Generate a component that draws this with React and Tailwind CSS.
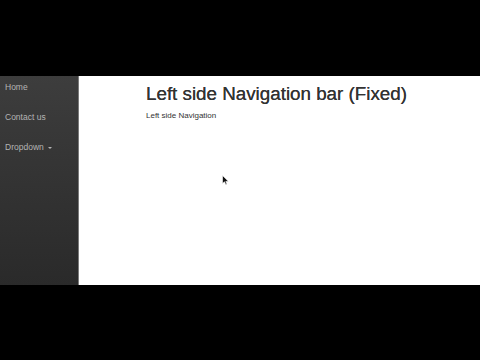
import React from 'react';

const navItems = [
  { label: 'Home' },
  { label: 'Contact us' },
  { label: 'Dropdown', caret: true },
];

const Sidebar = () => (
  <nav className="w-[79px] shrink-0 border-r border-[#7a7a7a] bg-gradient-to-b from-[#3d3d3d] to-[#2a2a2a]">
    <ul className="flex flex-col">
      {navItems.map((item) => (
        <li key={item.label} className="h-[30px] pl-[5px] pt-[7px]">
          <a className="flex items-center text-[8.5px] leading-none text-[#b4b4b4]">
            {item.label}
            {item.caret && (
              <span className="ml-[4px] mt-[1px] h-0 w-0 border-x-[2px] border-t-[2px] border-x-transparent border-t-[#b4b4b4]"></span>
            )}
          </a>
        </li>
      ))}
    </ul>
  </nav>
);

export default function App() {
  return (
    <div className="flex h-[360px] w-[480px] flex-col bg-black font-['Liberation_Sans',Arial,sans-serif]">
      <div className="h-[76px] shrink-0"></div>
      <div className="relative flex h-[209px] shrink-0">
        <Sidebar />
        <main className="flex-1 bg-white pl-[67px] pt-[7.5px] text-[#333]">
          <h1 className="text-[18.8px] leading-[19px] [text-shadow:0_0_0.3px_#333]">Left side Navigation bar (Fixed)</h1>
          <p className="mt-[9px] text-[8px] leading-none">Left side Navigation</p>
        </main>
        {/* mouse cursor */}
        <svg className="absolute left-[222px] top-[99px]" width="7" height="11" viewBox="0 0 7 11">
          <path d="M0.5 0.5 L0.5 8.5 L2.5 6.8 L3.8 9.8 L5 9.3 L3.8 6.4 L6.3 6.2 Z" fill="#111" stroke="#fff" strokeWidth="0.6" />
        </svg>
      </div>
      <div className="flex-1"></div>
    </div>
  );
}
